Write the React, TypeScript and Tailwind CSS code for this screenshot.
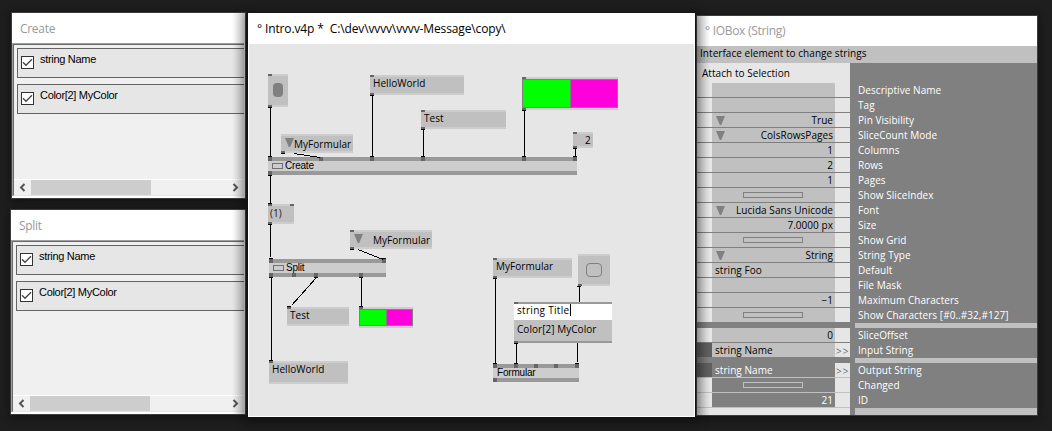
import type { ReactNode } from "react";

const OX = 249;
const OY = 44;

const lucida = "font-['Open_Sans','Noto_Sans',sans-serif]";
const gdi = "font-['Liberation_Sans',sans-serif]";

type Box = { x: number; y: number; w: number; h: number };

function At({ x, y, w, h, className = "", children }: Box & { className?: string; children?: ReactNode }) {
  return (
    <div className={`absolute ${className}`} style={{ left: x - OX, top: y - OY, width: w, height: h }}>
      {children}
    </div>
  );
}

function Pin({ x, y, h = 2 }: { x: number; y: number; h?: number }) {
  return <At x={x} y={y} w={4} h={h} className="bg-[#666666]" />;
}

function IONode({
  x, y, w, h, text, pad = "pl-[3px]", top = [], bottom = [], arrow = false, tracking = "tracking-[0.04px]", lead = "pt-0", children,
}: Box & {
  text?: string; pad?: string; top?: number[]; bottom?: number[]; arrow?: boolean; tracking?: string; lead?: string; children?: ReactNode;
}) {
  return (
    <>
      <At x={x} y={y} w={w} h={h} className={`flex border-y-2 border-[#cdcdcd] bg-[#c0c0c0] ${lead}`}>
        {arrow && (
          <svg className="absolute left-1 top-[2px]" width="9" height="9" viewBox="0 0 9 9">
            <path d="M0 0H9L5.2 9H3.8Z" fill="#808080" />
          </svg>
        )}
        {text && (
          <span className={`whitespace-pre text-[10px] leading-[13px] ${lucida} ${tracking} ${pad}`}>{text}</span>
        )}
        {children}
      </At>
      {top.map((p) => <Pin key={p} x={p} y={y} />)}
      {bottom.map((p) => <Pin key={p} x={p} y={y + h - 2} />)}
    </>
  );
}

function ModuleNode({ x, y, w, text, icon = true, top, bottom }: { x: number; y: number; w: number; text: string; icon?: boolean; top: number[]; bottom: number[] }) {
  return (
    <>
      <At x={x} y={y} w={w} h={18} className="flex items-center border-y-4 border-[#999999] bg-[#cdcdcd] pl-1">
        {icon && <span className="mr-[2px] h-[6px] w-[11px] shrink-0 border border-[#707070]" />}
        <span className={`text-[10px] leading-[10px] text-black ${gdi} tracking-[-0.2px]`}>{text}</span>
      </At>
      {top.map((p) => <Pin key={p} x={p} y={y} h={4} />)}
      {bottom.map((p) => <Pin key={p} x={p} y={y + 14} h={4} />)}
    </>
  );
}

function ColorNode({ x, y, w, h, pins }: Box & { pins: number[] }) {
  return (
    <>
      <At x={x} y={y} w={w} h={h} className="flex border-y-2 border-[#cdcdcd]">
        <div className="flex flex-1 gap-px border border-[#808080] bg-[#808080]">
          <div className="flex-1 bg-[#00ff00]" />
          <div className="flex-1 bg-[#ff00dc]" />
        </div>
      </At>
      {pins.map((p) => <Pin key={p} x={x} y={p} />)}
    </>
  );
}

const wires: [number, number, number, boolean, boolean][] = [
  [270, 107, 157, true, true],
  [372, 95, 157, true, true],
  [423, 129, 157, true, true],
  [524, 110, 157, true, true],
  [575, 148, 157, true, true],
  [270, 175, 204, true, true],
  [270, 224, 257, true, false],
  [271, 277, 361, true, true],
  [361, 277, 307, true, true],
  [495, 278, 364, true, true],
  [579, 286, 302, true, false],
  [516, 343, 364, true, true],
  [577, 343, 362, false, false],
];

function Wires() {
  return (
    <svg className="absolute left-0 top-0" width="445" height="372" viewBox="249 44 445 372" shapeRendering="crispEdges">
      {wires.map(([x, a, b, s, e]) => (
        <g key={`${x}-${a}`}>
          <rect x={x} y={a} width="1" height={b - a} />
          {s && <rect x={x - 2} y={a} width="4" height="1" />}
          {e && <rect x={x - 2} y={b - 1} width="4" height="1" />}
        </g>
      ))}
      <rect x="575" y="363" width="4" height="1" />
      <rect x="269" y="258" width="4" height="1" />
      <rect x="382" y="258" width="4" height="1" />
      <path d="M294 153.5L320 157.5M358 249.5L383 259.5M316.500 277.500L291.500 305.500" stroke="#000" strokeWidth="1" fill="none" />
      <rect x="281" y="153" width="4" height="1" />
      <rect x="350" y="249" width="4" height="1" />
      <rect x="314" y="277" width="4" height="1" />
      <rect x="287" y="306" width="4" height="1" />
    </svg>
  );
}

function CheckRow({ label }: { label: string }) {
  return (
    <div className="flex h-[30px] border border-r-0 border-[#646464] bg-[#e6e6e6] pl-[3px]">
      <svg className="mt-[7px] shrink-0" width="13" height="13" viewBox="0 0 13 13">
        <rect x="0.5" y="0.5" width="12" height="12" fill="#fff" stroke="#333" />
        <path d="M2 6.300L5 9.300L11 3.300" fill="none" stroke="#444" strokeWidth="1.300" />
      </svg>
      <span className={`ml-[6px] mt-[3px] whitespace-pre text-[11px] leading-[14px] text-black ${gdi} tracking-[-0.3px]`}>{label}</span>
    </div>
  );
}

function ScrollArrow({ flip = false }: { flip?: boolean }) {
  return (
    <svg width="17" height="15" viewBox="0 0 17 15" className={flip ? "-scale-x-100" : ""}>
      <path d="M10.500 4L7 7.500L10.500 11" fill="none" stroke="#555" strokeWidth="2" />
    </svg>
  );
}

function ListWindow({ title, size, titleClass }: { title: string; size: string; titleClass: string }) {
  return (
    <section className={`relative flex flex-col bg-white outline outline-[#3c3c3c] shadow-[0_2px_8px_3px_rgba(0,0,0,0.3)] ${size}`}>
      <h2 className={`h-[30px] pl-2 text-[12px] leading-[31px] text-[#999999] ${lucida} ${titleClass}`}>{title}</h2>
      <div className="mb-[2px] mr-px flex min-h-0 flex-1 flex-col border-l border-t border-[#a0a0a0]">
        <div className="flex min-h-0 flex-1 flex-col border-b border-l border-t border-b-[#e3e3e3] border-l-[#696969] border-t-[#696969] bg-[#f0f0f0]">
          <div className="flex flex-1 flex-col gap-[6px] pl-[3px] pt-[3px]">
            <CheckRow label="string Name" />
            <CheckRow label="Color[2] MyColor" />
          </div>
          <div className="flex h-4 border-t border-white">
            <ScrollArrow />
            <div className="w-[120px] bg-[#cdcdcd]" />
            <div className="flex-1" />
            <ScrollArrow flip />
          </div>
        </div>
      </div>
      <div className="pointer-events-none absolute inset-y-0 right-0 w-[13px] bg-linear-to-r from-transparent to-black/20" />
    </section>
  );
}

function Patch() {
  return (
    <div className="relative flex-1 overflow-hidden bg-[#e6e6e6] text-black">
      <IONode x={268} y={74} w={20} h={33} top={[268]} bottom={[268]}>
        <span className="ml-[5px] mt-[7px] h-[14px] w-[10px] rounded-[4px] bg-[#808080]" />
      </IONode>
      <IONode x={370} y={75} w={94} h={20} text="HelloWorld" top={[370]} bottom={[370]} />
      <IONode x={421} y={110} w={85} h={19} text="Test" top={[421]} bottom={[421]} />
      <IONode x={281} y={134} w={72} h={19} text="MyFormular" pad="pl-[13px]" lead="pt-[2px]" arrow bottom={[281]} />
      <ColorNode x={522} y={77} w={96} h={33} pins={[77, 108]} />
      <IONode x={573} y={132} w={20} h={16} text="2" pad="pl-[12px]" top={[573]} bottom={[573]} />
      <ModuleNode x={268} y={157} w={309} text="Create" top={[268, 319, 370, 421, 522, 573]} bottom={[268]} />
      <IONode x={268} y={204} w={26} h={20} text="(1)" pad="pl-[2px]" lead="pt-px text-[#202020]" top={[268, 290]} bottom={[268]} />
      <IONode x={350} y={230} w={82} h={19} text="MyFormular" pad="pl-[23px]" lead="pt-[2px]" arrow top={[350]} bottom={[350]} />
      <ModuleNode x={269} y={259} w={117} text="Split" top={[269, 382]} bottom={[269, 292, 314, 359]} />
      <IONode x={287} y={307} w={62} h={19} text="Test" top={[287]} />
      <ColorNode x={359} y={307} w={54} h={21} pins={[307]} />
      <IONode x={269} y={361} w={79} h={23} text="HelloWorld" top={[269]} />
      <IONode x={493} y={258} w={79} h={20} text="MyFormular" top={[493]} bottom={[493]} />
      <IONode x={578} y={254} w={32} h={32} bottom={[578]}>
        <span className="ml-2 mt-[7px] h-[14px] w-4 rounded-[4px] border border-[#808080]" />
      </IONode>
      <At x={514} y={302} w={98} h={41} className={`flex flex-col border-y-2 border-[#999999] bg-[#c0c0c0] text-[10px] leading-[13px] ${lucida}`}>
        <div className="flex h-4 bg-white pl-[3px]">
          <span className="w-[53px] whitespace-pre tracking-[0.3px]">string Title</span>
          <span className="h-3 w-px bg-black" />
        </div>
        <span className="whitespace-pre pl-[3px] pt-[3px] tracking-[0.04px]">Color[2] MyColor</span>
      </At>
      <Pin x={514} y={302} />
      <Pin x={514} y={341} />
      <ModuleNode x={493} y={364} w={86} text="Formular" icon={false} top={[493, 514, 534, 554, 575]} bottom={[493]} />
      <Wires />
    </div>
  );
}

type Row = { label: string; value?: string; kind?: "enum" | "toggle" | "left" };

const config: Row[] = [
  { label: "Descriptive Name" },
  { label: "Tag" },
  { label: "Pin Visibility", value: "True", kind: "enum" },
  { label: "SliceCount Mode", value: "ColsRowsPages", kind: "enum" },
  { label: "Columns", value: "1" },
  { label: "Rows", value: "2" },
  { label: "Pages", value: "1" },
  { label: "Show SliceIndex", kind: "toggle" },
  { label: "Font", value: "Lucida Sans Unicode", kind: "enum" },
  { label: "Size", value: "7.0000 px" },
  { label: "Show Grid", kind: "toggle" },
  { label: "String Type", value: "String", kind: "enum" },
  { label: "Default", value: "string Foo", kind: "left" },
  { label: "File Mask" },
  { label: "Maximum Characters", value: "−1" },
  { label: "Show Characters [#0..#32,#127]", kind: "toggle" },
];
const inputs: Row[] = [
  { label: "SliceOffset", value: "0" },
  { label: "Input String", value: "string Name", kind: "left" },
];
const outputs: Row[] = [
  { label: "Output String", value: "string Name", kind: "left" },
  { label: "Changed", kind: "toggle" },
  { label: "ID", value: "21" },
];

function Group({ rows, output = false, link = false, lastLine = false }: { rows: Row[]; output?: boolean; link?: boolean; lastLine?: boolean }) {
  return (
    <div className="flex flex-col">
      {rows.map((r, i) => {
        const line = i === rows.length - 1 && !lastLine ? "border-[#808080]" : output ? "border-[#c0c0c0]" : "border-[#808080]";
        const linked = link && r.kind === "left";
        return (
          <div key={r.label} className="flex h-[15px]">
            <div className={`flex w-[153px] border-b ${line}`}>
              <div className={`w-[15px] ${linked ? "bg-[#606060]" : "bg-[#e6e6e6]"}`} />
              <div className={`relative flex w-[123px] ${output ? "bg-[#808080] text-white" : "bg-[#c0c0c0] text-black"} ${r.kind === "left" ? "justify-start pl-[3px]" : "justify-end pr-[2px]"}`}>
                {r.kind === "enum" && (
                  <svg className="absolute left-1 top-[3px]" width="9" height="9" viewBox="0 0 9 9">
                    <path d="M0 0H9L5.200 9H3.800Z" fill="#808080" />
                  </svg>
                )}
                {r.kind === "toggle" && (
                  <span className={`mr-[30px] mt-1 h-[6px] w-[60px] border ${output ? "border-[#c0c0c0]" : "border-[#808080]"}`} />
                )}
                {r.value && <span className={`whitespace-pre ${r.kind === "left" ? "leading-[14px]" : "leading-[15px]"}`}>{r.value}</span>}
              </div>
              <div className="w-[15px] bg-[#e6e6e6] pl-px text-[10px] leading-[16px] tracking-[1px] text-[#707070]">{linked ? ">>" : ""}</div>
            </div>
            <span className="whitespace-pre pl-2 leading-[14px] text-white">{r.label}</span>
          </div>
        );
      })}
    </div>
  );
}

function Inspector() {
  return (
    <section className={`relative mt-4 flex h-[399px] w-[340px] flex-col bg-white text-[10px] tracking-[0.05px] outline outline-[#3c3c3c] shadow-[0_2px_8px_3px_rgba(0,0,0,0.3)] ${lucida}`}>
      <h2 className="h-[30px] whitespace-pre pl-2 text-[12px] leading-[30px] tracking-[-0.3px] text-[#999999]">° IOBox (String)</h2>
      <div className="h-[17px] bg-[#c0c0c0] pl-[3px] leading-[15px] text-black">Interface element to change strings</div>
      <div className="flex flex-1 flex-col bg-[#808080]">
        <div className="h-5 w-[153px] bg-[#e6e6e6] pl-[5px] leading-[21px] text-black">Attach to Selection</div>
        <Group rows={config} />
        <div className="ml-[158px] h-[5px] bg-[#c0c0c0]" />
        <Group rows={inputs} link />
        <div className="ml-[158px] h-[5px] bg-[#c0c0c0]" />
        <Group rows={outputs} output link lastLine />
        <div className="flex flex-1 gap-[5px]">
          <div className="w-[153px] bg-[#e6e6e6]" />
          <div className="flex-1 bg-[#c0c0c0]" />
        </div>
      </div>
      <div className="pointer-events-none absolute inset-y-0 left-0 w-[13px] bg-linear-to-l from-transparent to-black/20" />
    </section>
  );
}

export default function App() {
  return (
    <main className="flex h-[431px] w-[1052px] overflow-hidden bg-[#1e1e1e]">
      <div className="flex w-[248px] shrink-0 flex-col gap-3 pt-[13px]">
        <ListWindow title="Create" size="ml-3 h-[185px] w-[233px]" titleClass="tracking-[-0.3px]" />
        <ListWindow title="Split" size="ml-[11px] h-[204px] w-[234px]" titleClass="tracking-[-0.3px]" />
      </div>
      <section className="z-10 mt-[13px] flex h-[404px] w-[447px] shrink-0 flex-col border border-t-0 border-white bg-white shadow-[0_3px_10px_3px_rgba(0,0,0,0.4)]">
        <h1 className={`h-[31px] shrink-0 whitespace-pre pl-2 text-[12px] leading-[31px] text-black ${lucida} tracking-[-0.13px]`}>
          {"° Intro.v4p *  C:\\dev\\vvvv\\vvvv-Message\\copy\\"}
        </h1>
        <Patch />
      </section>
      <div className="ml-[2px] shrink-0">
        <Inspector />
      </div>
    </main>
  );
}
